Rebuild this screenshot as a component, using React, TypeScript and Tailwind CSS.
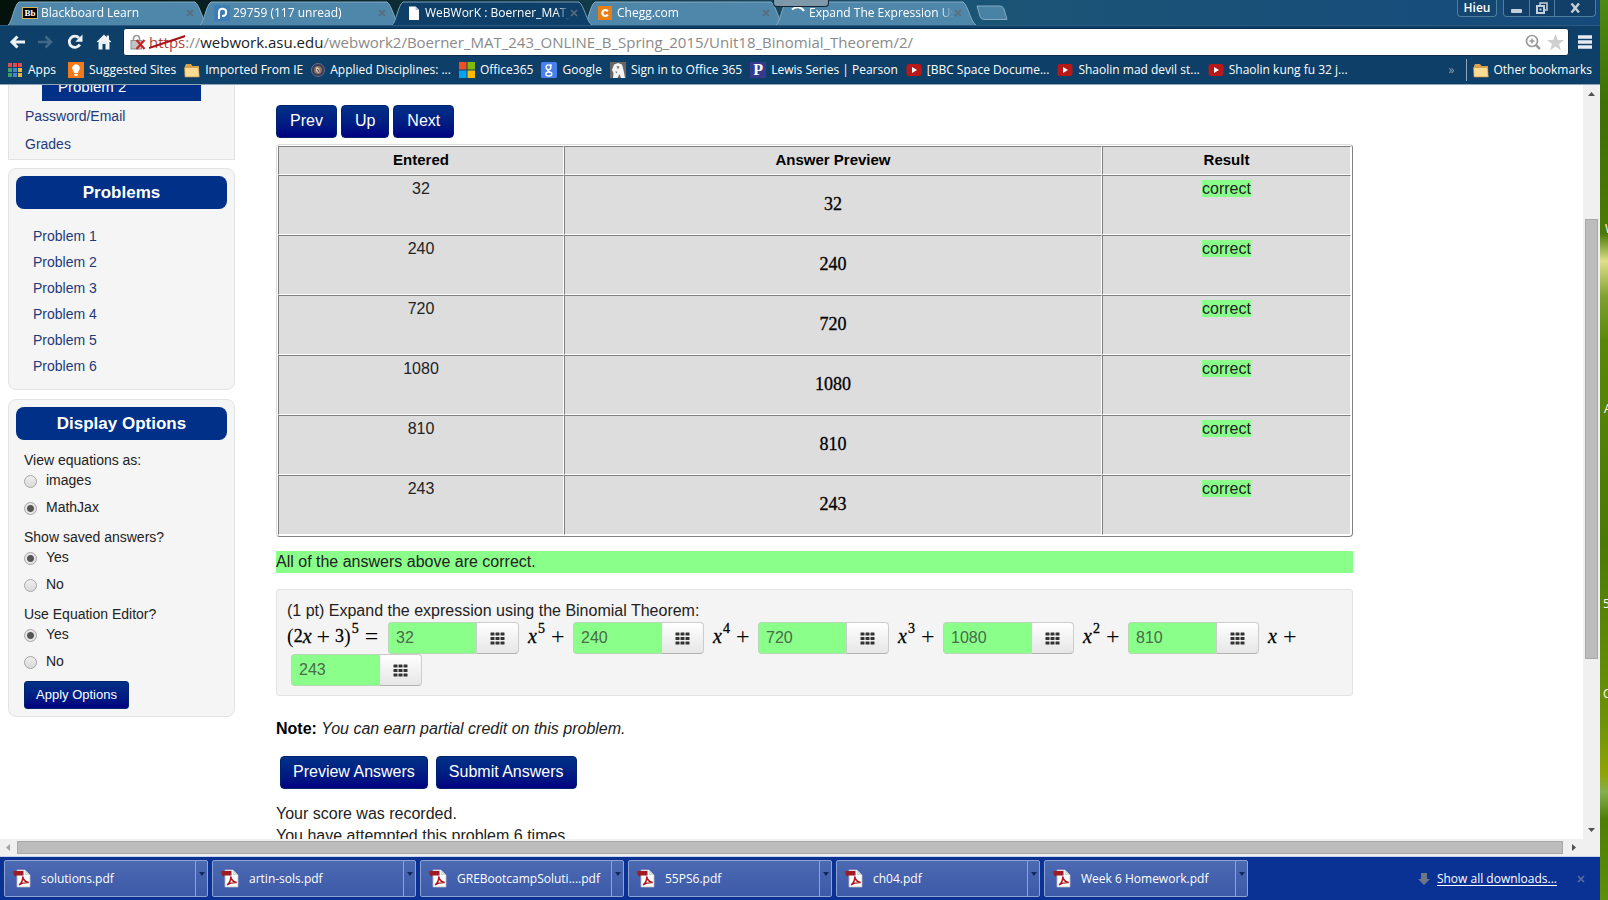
import React from "react";

const UI = "font-['Open_Sans','Noto_Sans',sans-serif]";

/* ---------- small drawings ---------- */

function PdfIcon() {
  return (
    <svg width="18" height="19" viewBox="0 0 18 19" aria-hidden="true">
      <path d="M4 1h8l5 5v12H4z" fill="#fdfdfd" stroke="#b9b9c4" strokeWidth="0.8" />
      <path d="M12 1v5h5z" fill="#d7d7de" />
      <path d="M0.5 2h10v4.6h-7L2 8V6.6H0.5z" fill="#a01c22" />
      <path d="M6 16c2.500-2 4-5 3.700-8.500 0.600 3.500 2.500 5.500 6 6-4-.4-7 .6-9.700 2.500z" fill="none" stroke="#b01c22" strokeWidth="1.500" />
    </svg>
  );
}

function FolderIcon() {
  return (
    <svg width="16" height="15" viewBox="0 0 16 15" aria-hidden="true">
      <path d="M1 3l1-2h5l1.500 2H15v10.500H1z" fill="#d9a24a" />
      <path d="M0.500 4.500h14l0.800 9.500H1z" fill="#fcdc94" stroke="#c48f3d" strokeWidth="0.600" />
    </svg>
  );
}

function YouTubeIcon() {
  return (
    <svg width="16" height="14" viewBox="0 0 16 14" aria-hidden="true">
      <rect x="0.500" y="1" width="15" height="12" rx="2.500" fill="#b81818" />
      <path d="M6 4l5 3-5 3z" fill="#fff" />
    </svg>
  );
}

function AppsIcon() {
  const colours = ["#e04c4c", "#e04c4c", "#e04c4c", "#3ba06b", "#4285d6", "#e9b53a", "#3ba06b", "#4285d6", "#e9b53a"];
  return (
    <svg width="14" height="14" viewBox="0 0 14 14" aria-hidden="true">
      {colours.map((c, i) => (
        <rect key={i} x={(i % 3) * 5} y={Math.floor(i / 3) * 5} width="4" height="4" fill={c} />
      ))}
    </svg>
  );
}

function BulbIcon() {
  return (
    <svg width="16" height="16" viewBox="0 0 16 16" aria-hidden="true">
      <rect width="16" height="16" fill="#f27a1a" />
      <path d="M8 2.200a4 4 0 0 1 2.300 7.200L10 11H6l-.3-1.600A4 4 0 0 1 8 2.200z" fill="#fff" />
      <path d="M6.200 12h3.600v1.200L8.800 14H7.200l-1-.8z" fill="#fff" />
    </svg>
  );
}

function SealIcon() {
  return (
    <svg width="14" height="14" viewBox="0 0 14 14" aria-hidden="true">
      <circle cx="7" cy="7" r="6.500" fill="#3b3a5c" stroke="#6f6c84" />
      <circle cx="7" cy="7" r="4" fill="#8b7560" />
      <path d="M5 4l3 1 1 4-2 1-2-2z" fill="#d8c9ae" />
      <path d="M6.500 6l1.500 3" stroke="#3b2f42" />
    </svg>
  );
}

function WindowsIcon() {
  return (
    <svg width="16" height="16" viewBox="0 0 16 16" aria-hidden="true">
      <rect width="7.500" height="7.500" fill="#f25022" />
      <rect x="8.500" width="7.500" height="7.500" fill="#7fba00" />
      <rect y="8.500" width="7.500" height="7.500" fill="#00a4ef" />
      <rect x="8.500" y="8.500" width="7.500" height="7.500" fill="#ffb900" />
    </svg>
  );
}

function GoogleIcon() {
  return (
    <svg width="16" height="16" viewBox="0 0 16 16" aria-hidden="true">
      <rect width="16" height="16" rx="1.500" fill="#4a80ee" />
      <circle cx="7.500" cy="5.300" r="2.400" fill="none" stroke="#fff" strokeWidth="1.400" />
      <ellipse cx="7.800" cy="12" rx="3" ry="2" fill="none" stroke="#fff" strokeWidth="1.400" />
      <path d="M9 3.200h2M8 7.500c-2 1-1.500 1.700.8 2.600" fill="none" stroke="#fff" strokeWidth="1.200" />
    </svg>
  );
}

function SunDevilIcon() {
  return (
    <svg width="16" height="16" viewBox="0 0 16 16" aria-hidden="true">
      <rect width="16" height="16" fill="#6a6663" />
      <path d="M4 2.500l4-1.500 4 1.500 1.500 5.500 1.500 8h-4l-1.500-4-2 4H3l.5-5L2 8z" fill="#f4f4f4" />
      <path d="M6.500 4l3 .5-1.500 3zM5.500 9l2 1-1.500 1.500z" fill="#77726d" />
    </svg>
  );
}

function PearsonIcon() {
  return (
    <span className="flex size-4 items-center justify-center bg-[#363a8e] font-['Liberation_Serif',serif] text-[16px] leading-none font-bold text-white">
      P
    </span>
  );
}

function SmallCross() {
  return (
    <svg width="8" height="8" viewBox="0 0 8 8" aria-hidden="true">
      <path d="M1 1l6 6M7 1l-6 6" stroke="currentColor" strokeWidth="1.700" />
    </svg>
  );
}

/* ---------- tab strip ---------- */

const tabs = [
  {
    title: "Blackboard Learn",
    icon: (
      <span className="flex h-3 w-4 items-center justify-center border border-[#d3b35c] bg-black font-['Liberation_Serif',serif] text-[9px] leading-none font-bold text-white">
        Bb
      </span>
    ),
  },
  {
    title: "29759 (117 unread)",
    icon: (
      <svg width="16" height="16" viewBox="0 0 16 16" aria-hidden="true">
        <rect width="16" height="16" fill="#3d7cb4" />
        <path d="M5 14V7a3.600 3.600 0 1 1 3.600 4H8" fill="none" stroke="#fff" strokeWidth="2" />
      </svg>
    ),
  },
  {
    title: "WeBWorK : Boerner_MAT_",
    active: true,
    icon: (
      <svg width="16" height="16" viewBox="0 0 16 16" aria-hidden="true">
        <path d="M3 1.500h6.500L13 5v10H3z" fill="#fff" />
        <path d="M9.500 1.500V5H13z" fill="#b8c4cf" />
      </svg>
    ),
  },
  {
    title: "Chegg.com",
    icon: (
      <svg width="14" height="14" viewBox="0 0 14 14" aria-hidden="true">
        <rect width="14" height="14" fill="#e87f14" />
        <path d="M9.800 5.300A3 3 0 1 0 9.800 8.700" fill="none" stroke="#fff" strokeWidth="2.200" />
      </svg>
    ),
  },
  {
    title: "Expand The Expression Us",
    icon: (
      <svg width="16" height="16" viewBox="0 0 16 16" aria-hidden="true">
        <path d="M2 4.500C6 1 11 1.500 14 6" fill="none" stroke="#fff" strokeWidth="2" />
      </svg>
    ),
  },
];

function TabStrip() {
  return (
    <header className="relative flex h-[25px] shrink-0 items-end bg-linear-to-r from-[#04120c] via-[#1b5575] via-60% to-[#164a7c] pl-2">
      {tabs.map((t) => (
        <div key={t.title} className={t.active ? "relative z-10 -mr-2 h-6 w-[200px]" : "relative -mr-2 h-6 w-[200px]"}>
          <svg className="absolute inset-0 size-full" viewBox="0 0 200 24" preserveAspectRatio="none" aria-hidden="true">
            <path
              d="M0 24C4 22 6 4 11 1H187C192 4 195 22 200 24"
              fill={t.active ? "#0d3f68" : "#4f87aa"}
              stroke={t.active ? "#7d9db5" : "#86abc2"}
            />
          </svg>
          <div className="relative flex h-full items-center pr-[14px] pl-[14px]">
            <span className="flex w-[19px] shrink-0">{t.icon}</span>
            <button
              className={`${UI} min-w-0 flex-1 mask-r-from-90% text-left text-[12px] leading-4 whitespace-nowrap text-white`}
            >
              {t.title}
            </button>
            <button aria-label={`Close ${t.title}`} className="text-[#5c6c77]">
              <SmallCross />
            </button>
          </div>
        </div>
      ))}
      <button aria-label="New tab" className="mb-1 ml-2">
        <svg width="32" height="16" viewBox="0 0 32 16" aria-hidden="true">
          <path d="M1 1h23q3 0 4 3l3 10.500H8q-3 0-4-3z" fill="#4a82a6" stroke="#83a9c0" />
        </svg>
      </button>
      <div className="absolute top-0 left-[773px] z-20 h-[7px] w-[56px] rounded-b-sm border border-t-0 border-[#16242f] bg-[#7f98a9]" />
      <div className={`${UI} ml-auto flex h-[17px] self-start pr-1 text-[12px] text-white`}>
        <button className="mr-[6px] w-10 rounded-b border border-t-0 border-[#4e7f9f] bg-[#15466f] leading-4 font-semibold">Hieu</button>
        <div className="flex divide-x divide-[#4e7f9f] rounded-b border border-t-0 border-[#4e7f9f] bg-[#123f68]">
          <button aria-label="Minimize" className="flex w-[26px] items-center justify-center">
            <span className="mt-[6px] h-1 w-[11px] rounded-[1px] bg-[#c4d0da]" />
          </button>
          <button aria-label="Restore" className="flex w-[25px] items-center justify-center">
            <svg width="12" height="12" viewBox="0 0 12 12" aria-hidden="true">
              <path d="M4 3V1h7v7H9" fill="none" stroke="#c4d0da" strokeWidth="1.500" />
              <rect x="1" y="4" width="7" height="7" fill="#123f68" stroke="#c4d0da" strokeWidth="2" />
              <rect x="3.500" y="6.500" width="2" height="2" fill="#c4d0da" />
            </svg>
          </button>
          <button aria-label="Close window" className="flex w-10 items-center justify-center">
            <svg width="11" height="10" viewBox="0 0 11 10" aria-hidden="true">
              <path d="M1.500 0.500l7.500 9M9 0.500l-7.500 9" stroke="#c4d0da" strokeWidth="2.400" />
            </svg>
          </button>
        </div>
      </div>
    </header>
  );
}

/* ---------- toolbar ---------- */

function Toolbar() {
  return (
    <div className="flex h-[34px] shrink-0 items-center border-t border-[#2b5a80] bg-[#0d3f68] pr-2 pb-px pl-[9px]">
      <nav className="flex w-[114px] shrink-0 items-center gap-[13px]">
        <button aria-label="Back">
          <svg width="16" height="14" viewBox="0 0 16 14" aria-hidden="true">
            <path d="M16 7H3M8.500 1.500L3 7l5.500 5.500" fill="none" stroke="#eef3f7" strokeWidth="3" />
          </svg>
        </button>
        <button aria-label="Forward">
          <svg width="16" height="14" viewBox="0 0 16 14" aria-hidden="true">
            <path d="M0 7h13M7.500 1.500L13 7l-5.500 5.500" fill="none" stroke="#406886" strokeWidth="2.600" />
          </svg>
        </button>
        <button aria-label="Reload">
          <svg width="16" height="16" viewBox="0 0 16 16" aria-hidden="true">
            <path d="M12.800 10.500A5.600 5.600 0 1 1 12 4" fill="none" stroke="#eef3f7" strokeWidth="2.800" />
            <path d="M15.500 0.500v7.200H8.300z" fill="#eef3f7" />
          </svg>
        </button>
        <button aria-label="Home">
          <svg width="16" height="16" viewBox="0 0 16 16" aria-hidden="true">
            <path d="M8 0.500L0.500 8h2v7.500h4V10h3v5.500h4V8h2L13 5.500V1.500h-2.300v1.700z" fill="#eef3f7" />
          </svg>
        </button>
      </nav>
      <div className={`${UI} flex h-7 min-w-0 flex-1 items-center rounded-[3px] border border-[#0a2c4a] bg-white pr-1 pl-[6px] text-[15px] leading-5`}>
        <svg width="16" height="17" viewBox="0 0 16 17" className="mr-[3px] shrink-0" aria-hidden="true">
          <path d="M3.500 7V4.500a3 3 0 0 1 6 0V7" fill="none" stroke="#9a9a9a" strokeWidth="1.600" />
          <rect x="1" y="6.500" width="10.500" height="8.500" fill="#c4c4c4" stroke="#8f8f8f" />
          <path d="M6.500 6l8 9M14.500 6l-8 9" stroke="#c22626" strokeWidth="2.200" />
        </svg>
        <label htmlFor="url" className="flex shrink-0">
          <span className="relative text-[#b1403c]">
            https
            <svg className="absolute inset-0 size-full" viewBox="0 0 36 20" preserveAspectRatio="none" aria-hidden="true">
              <path d="M0 16L36 4" stroke="#a81414" strokeWidth="2" />
            </svg>
          </span>
          <span className="text-[#8a8a8a]">://</span>
          <span className="text-[#222]">webwork.asu.edu</span>
        </label>
        <input
          id="url"
          type="text"
          defaultValue="/webwork2/Boerner_MAT_243_ONLINE_B_Spring_2015/Unit18_Binomial_Theorem/2/"
          className="min-w-0 flex-1 bg-transparent text-[#8a8a8a] outline-none"
        />
        <button aria-label="Zoom" className="mr-[6px]">
          <svg width="16" height="16" viewBox="0 0 16 16" aria-hidden="true">
            <circle cx="7" cy="7" r="5.500" fill="none" stroke="#9b9b9b" strokeWidth="1.700" />
            <path d="M7 4.500v5M4.500 7h5M11 11l4 4" stroke="#9b9b9b" strokeWidth="1.500" />
            <path d="M11.300 11.300l3.500 3.500" stroke="#9b9b9b" strokeWidth="2.600" />
          </svg>
        </button>
        <button aria-label="Bookmark this page">
          <svg width="17" height="17" viewBox="0 0 17 17" aria-hidden="true">
            <path d="M8.500 0l2.300 6h6.200l-5 4 1.900 6.500-5.400-3.900-5.400 3.900L5 10 0 6h6.200z" fill="#cfcfcf" />
          </svg>
        </button>
      </div>
      <button aria-label="Menu" className="ml-[9px]">
        <svg width="14" height="14" viewBox="0 0 14 14" aria-hidden="true">
          <path d="M0 2h14M0 7h14M0 12h14" stroke="#e6ecf2" strokeWidth="3.400" />
        </svg>
      </button>
    </div>
  );
}

const bookmarks = [
  { label: "Suggested Sites", icon: <BulbIcon /> },
  { label: "Imported From IE", icon: <FolderIcon /> },
  { label: "Applied Disciplines: ...", icon: <SealIcon /> },
  { label: "Office365", icon: <WindowsIcon /> },
  { label: "Google", icon: <GoogleIcon /> },
  { label: "Sign in to Office 365", icon: <SunDevilIcon /> },
  { label: "Lewis Series | Pearson", icon: <PearsonIcon /> },
  { label: "[BBC Space Docume...", icon: <YouTubeIcon /> },
  { label: "Shaolin mad devil st...", icon: <YouTubeIcon /> },
  { label: "Shaolin kung fu 32 j...", icon: <YouTubeIcon /> },
];

function BookmarksBar() {
  return (
    <nav className={`${UI} flex h-[26px] shrink-0 items-center gap-2 border-b border-[#8fa5b8] bg-[#0d3f68] pr-2 pb-[3px] pl-2 text-[12px] leading-4 whitespace-nowrap text-white`}>
      <a href="#apps" className="mr-1 flex items-center gap-[6px]">
        <AppsIcon />
        Apps
      </a>
      {bookmarks.map((b) => (
        <a key={b.label} href="#bookmark" className="flex items-center gap-[5px]">
          {b.icon}
          {b.label}
        </a>
      ))}
      <button aria-label="More bookmarks" className="ml-auto text-[#8aa0b3]">
        »
      </button>
      <a href="#other" className="ml-1 flex h-[22px] items-center gap-1 border-l border-[#8fa5b8] pl-[6px]">
        <FolderIcon />
        Other bookmarks
      </a>
    </nav>
  );
}

/* ---------- page: sidebar ---------- */

const panel = "rounded-[8px] border border-[#e3e3e3] bg-[#f5f5f5] px-[7px] py-[7px]";
const navy = "bg-linear-to-b from-[#003087] to-[#000080]";
const mainButton = `${navy} h-[33px] rounded-[4px] border border-[#00246b] pb-px text-white`;

function PanelTitle({ children }: { children: React.ReactNode }) {
  return (
    <h2 className="rounded-[8px] bg-[#003087] text-center text-[17px] leading-[33px] font-bold text-white">{children}</h2>
  );
}

function OptionGroup({ name, legend, options, selected }: { name: string; legend: string; options: string[]; selected: string }) {
  return (
    <fieldset className="mb-[10px]">
      <legend className="leading-5">{legend}</legend>
      {options.map((o) => (
        <label key={o} className="mb-[7px] flex h-5 items-start gap-[9px] leading-5 last:mb-0">
          <input
            type="radio"
            name={name}
            defaultChecked={o === selected}
            className="mt-[5px] size-[13px] appearance-none rounded-full border border-[#a6a6a6] bg-linear-to-b from-[#efefef] to-[#d9d9d9] checked:bg-[radial-gradient(circle,#555_0_3px,#e6e6e6_4px)]"
          />
          {o}
        </label>
      ))}
    </fieldset>
  );
}

function Sidebar() {
  return (
    <aside className="w-[227px] shrink-0 text-[14px]">
      <div className="border border-t-0 border-[#e3e3e3] bg-[#f5f5f5] pb-px text-[#1e3a78]">
        <a href="#problem-2" className="-mt-3 mr-[33px] mb-px ml-[33px] block bg-[#003087] pl-4 text-[15px] leading-7 text-white">
          Problem 2
        </a>
        <a href="#password" className="block pl-4 leading-7">
          Password/Email
        </a>
        <a href="#grades" className="block pl-4 leading-7">
          Grades
        </a>
      </div>

      <section className={`${panel} mt-2`}>
        <PanelTitle>Problems</PanelTitle>
        <ul className="mt-[14px] mb-[3px] pl-[17px] text-[#1e3a78]">
          {[1, 2, 3, 4, 5, 6].map((n) => (
            <li key={n} className="leading-[26px]">
              <a href={`#problem-${n}`}>Problem {n}</a>
            </li>
          ))}
        </ul>
      </section>

      <section className={`${panel} mt-[9px]`}>
        <PanelTitle>Display Options</PanelTitle>
        <form className="mt-[10px] pl-2 text-[#222]" onSubmit={(e) => e.preventDefault()}>
          <OptionGroup name="math" legend="View equations as:" options={["images", "MathJax"]} selected="MathJax" />
          <OptionGroup name="saved" legend="Show saved answers?" options={["Yes", "No"]} selected="Yes" />
          <OptionGroup name="editor" legend="Use Equation Editor?" options={["Yes", "No"]} selected="Yes" />
          <button type="submit" className={`${navy} h-7 rounded-[3px] border border-[#00246b] px-[11px] pb-px text-[13px] text-white`}>
            Apply Options
          </button>
        </form>
      </section>
    </aside>
  );
}

/* ---------- page: problem ---------- */

const answers = ["32", "240", "720", "1080", "810", "243"];
const cell = "border border-t-[#808080] border-l-[#808080] border-r-white border-b-white bg-[#ddd]";
const math = "font-['Liberation_Serif',serif] text-[18px] text-black";
const operator = "text-[24px]";
const variable = "text-[20px] italic";

function ResultsTable() {
  return (
    <table className="mt-[6px] w-full border-separate border-spacing-0 rounded-[4px] border border-t-[#ddd] border-r-[#808080] border-b-[#808080] border-l-[#ddd] p-px text-center">
      <thead>
        <tr className="h-[29px] text-[15px] text-black">
          <th scope="col" className={`${cell} w-[286px]`}>Entered</th>
          <th scope="col" className={`${cell}`}>Answer Preview</th>
          <th scope="col" className={`${cell} w-[249px]`}>Result</th>
        </tr>
      </thead>
      <tbody>
        {answers.map((a) => (
          <tr key={a} className="h-[60px]">
            <td className={`${cell} pt-[2px] align-top leading-[22px]`}>{a}</td>
            <td className={`${cell} ${math} pb-[2px] [-webkit-text-stroke:0.3px_#000]`}>{a}</td>
            <td className={`${cell} pt-[2px] align-top leading-[22px]`}>
              <span className="bg-[#8aff8a]">correct</span>
            </td>
          </tr>
        ))}
      </tbody>
    </table>
  );
}

function AnswerBox({ value, label }: { value: string; label: string }) {
  return (
    <span className="flex h-8 w-[131px]">
      <input
        type="text"
        aria-label={label}
        defaultValue={value}
        className="w-[88px] rounded-l-[4px] border border-r-0 border-[#b5d9b5] bg-[#8aff8a] px-[7px] text-[#4a6b4a] outline-none"
      />
      <button
        aria-label={`Equation editor for ${label}`}
        className="flex flex-1 items-center justify-center rounded-r-[4px] border border-[#ccc] border-b-[#b3b3b3] bg-linear-to-b from-white to-[#e6e6e6]"
      >
        <svg width="15" height="13" viewBox="0 0 15 13" aria-hidden="true">
          {[0, 1, 2].map((r) =>
            [0, 1, 2].map((c) => <rect key={`${r}${c}`} x={c * 5 + 0.5} y={r * 4.5 + 0.5} width="4" height="3" rx="0.500" fill="#333" />)
          )}
        </svg>
      </button>
    </span>
  );
}

function Exponent({ children }: { children: React.ReactNode }) {
  return (
    <sup className="top-0 -mt-[7px] ml-px text-[14px] leading-7 [-webkit-text-stroke:0.3px_#000]">{children}</sup>
  );
}

function Term({ power }: { power?: string }) {
  return (
    <span className={`${math} flex w-[37px] leading-7 whitespace-nowrap`}>
      <span className={`${variable} [-webkit-text-stroke:0.3px_#000]`}>x</span>
      {power && <Exponent>{power}</Exponent>}
      <span className={`${operator} ml-[6px]`}>+</span>
    </span>
  );
}

function Problem() {
  return (
    <section className="mt-4 rounded-[3px] border border-[#e3e3e3] bg-[#f4f4f4] px-[10px] pt-[10px] pb-[9px]">
      <p className="leading-[22px]">(1 pt) Expand the expression using the Binomial Theorem:</p>
      <div className="flex flex-wrap">
        <span className={`${math} flex w-[101px] leading-7 whitespace-nowrap`}>
          <span className="text-[20px]">(</span>
          <span className="[-webkit-text-stroke:0.3px_#000]">2</span>
          <span className={`${variable} [-webkit-text-stroke:0.3px_#000]`}>x</span>
          <span className={`${operator} mx-[5px]`}>+</span>
          <span className="[-webkit-text-stroke:0.3px_#000]">3</span>
          <span className="text-[20px]">)</span>
          <Exponent>5</Exponent>
          <span className={`${operator} ml-[6px]`}>=</span>
        </span>
        {["5", "4", "3", "2", ""].map((p, i) => (
          <span key={i} className="mr-2 flex gap-[9px]">
            <AnswerBox value={answers[i]} label={`coefficient ${i + 1}`} />
            <Term power={p} />
          </span>
        ))}
        <span className="basis-full pl-1">
          <AnswerBox value={answers[5]} label="constant term" />
        </span>
      </div>
    </section>
  );
}

function MainColumn() {
  return (
    <main className="ml-[41px] w-[1077px] shrink text-[16px] text-[#222]">
      <div className="mt-5 flex gap-1">
        <button className={`${mainButton} px-[13px]`}>Prev</button>
        <button className={`${mainButton} px-[13px]`}>Up</button>
        <button className={`${mainButton} px-[13px]`}>Next</button>
      </div>
      <ResultsTable />
      <p className="mt-[14px] bg-[#8aff8a] leading-[22px]">All of the answers above are correct.</p>
      <Problem />
      <p className="mt-[22px] leading-[22px]">
        <b className="text-black">Note:</b> <i>You can earn partial credit on this problem.</i>
      </p>
      <div className="mt-4 ml-1 flex gap-2">
        <button className={`${mainButton} px-3`}>Preview Answers</button>
        <button className={`${mainButton} px-3`}>Submit Answers</button>
      </div>
      <p className="mt-[14px] leading-[22px]">
        Your score was recorded.
        <br />
        You have attempted this problem 6 times.
      </p>
    </main>
  );
}

/* ---------- scroll bars and downloads ---------- */

function Arrow({ d }: { d: string }) {
  return (
    <svg width="17" height="17" viewBox="0 0 17 17" className="shrink-0" aria-hidden="true">
      <path d={d} fill="#505050" />
    </svg>
  );
}

function VerticalScroll() {
  return (
    <div className="flex w-[17px] shrink-0 flex-col bg-[#f0f0f0]">
      <Arrow d="M5 11h7l-3.500-4z" />
      <div className="flex flex-1 flex-col px-[2px]">
        <div className="basis-[16.2%]" />
        <div className="basis-[61.2%] border border-[#a8a8a8] bg-[#bcbcbc]" />
      </div>
      <Arrow d="M5 6h7l-3.500 4z" />
    </div>
  );
}

function HorizontalScroll() {
  return (
    <div className="flex h-[17px] shrink-0 bg-[#f0f0f0] pr-[17px]">
      <svg width="17" height="17" viewBox="0 0 17 17" className="shrink-0" aria-hidden="true">
        <path d="M10 5v7L6 8.500z" fill="#a3a3a3" />
      </svg>
      <div className="flex flex-1 py-[2px] pr-[3px]">
        <div className="flex-1 border border-[#a8a8a8] bg-[#bcbcbc]" />
      </div>
      <Arrow d="M6 5v7l4-3.500z" />
    </div>
  );
}

const downloads = ["solutions.pdf", "artin-sols.pdf", "GREBootcampSoluti....pdf", "55PS6.pdf", "ch04.pdf", "Week 6 Homework.pdf"];

function DownloadsBar() {
  return (
    <footer className={`${UI} flex h-11 shrink-0 items-center gap-1 border-t border-[#c8d4ec] bg-[#0a3194] pl-1 text-[12px] text-white`}>
      {downloads.map((d) => (
        <div key={d} className="flex h-[37px] w-[204px] rounded-[2px] border border-[#8fa3d2] bg-linear-to-b from-[#4c69b2] to-[#3c5aa8]">
          <button className="flex min-w-0 flex-1 items-center gap-[10px] pl-2 text-left whitespace-nowrap">
            <PdfIcon />
            {d}
          </button>
          <button aria-label={`Options for ${d}`} className="flex w-3 justify-center border-l border-[#8fa3d2] pt-[11px]">
            <svg width="6" height="4" viewBox="0 0 6 4" aria-hidden="true">
              <path d="M0 0h6L3 4z" fill="#12275e" />
            </svg>
          </button>
        </div>
      ))}
      <a href="#downloads" className="ml-auto flex items-center gap-[7px]">
        <svg width="12" height="12" viewBox="0 0 12 12" aria-hidden="true">
          <path d="M3 0h6v6h3l-6 6-6-6h3z" fill="#6e7586" />
        </svg>
        <span className="underline underline-offset-2">Show all downloads...</span>
      </a>
      <button aria-label="Close downloads bar" className="mr-[15px] ml-4 text-[#5d6c98]">
        <SmallCross />
      </button>
    </footer>
  );
}

function Desktop() {
  return (
    <div className={`${UI} relative w-2 shrink-0 overflow-hidden bg-[linear-gradient(to_bottom,#4c8a10_0%,#3f6f06_12%,#4c7a08_26%,#dfe08a_29%,#7fa030_33%,#5a8708_38%,#4a7a06_60%,#6d9208_80%,#8fa306_86%,#86b050_88%,#4f7f06_91%,#5d8f0a_100%)] text-[12px] leading-4 text-white`}>
      <span className="absolute top-[221px] left-[5px]">W</span>
      <span className="absolute top-[401px] left-[4px]">A</span>
      <span className="absolute top-[596px] left-[3px]">5</span>
      <span className="absolute top-[686px] left-[3px]">C</span>
    </div>
  );
}

export default function App() {
  return (
    <div className="flex h-screen overflow-hidden bg-white">
      <div className="flex min-w-0 flex-1 flex-col">
        <TabStrip />
        <Toolbar />
        <BookmarksBar />
        <div className="flex min-h-0 flex-1">
          <div className="flex min-w-0 flex-1 items-start overflow-hidden pl-2 font-['Liberation_Sans',Arial,sans-serif]">
            <Sidebar />
            <MainColumn />
          </div>
          <VerticalScroll />
        </div>
        <HorizontalScroll />
        <DownloadsBar />
      </div>
      <Desktop />
    </div>
  );
}
